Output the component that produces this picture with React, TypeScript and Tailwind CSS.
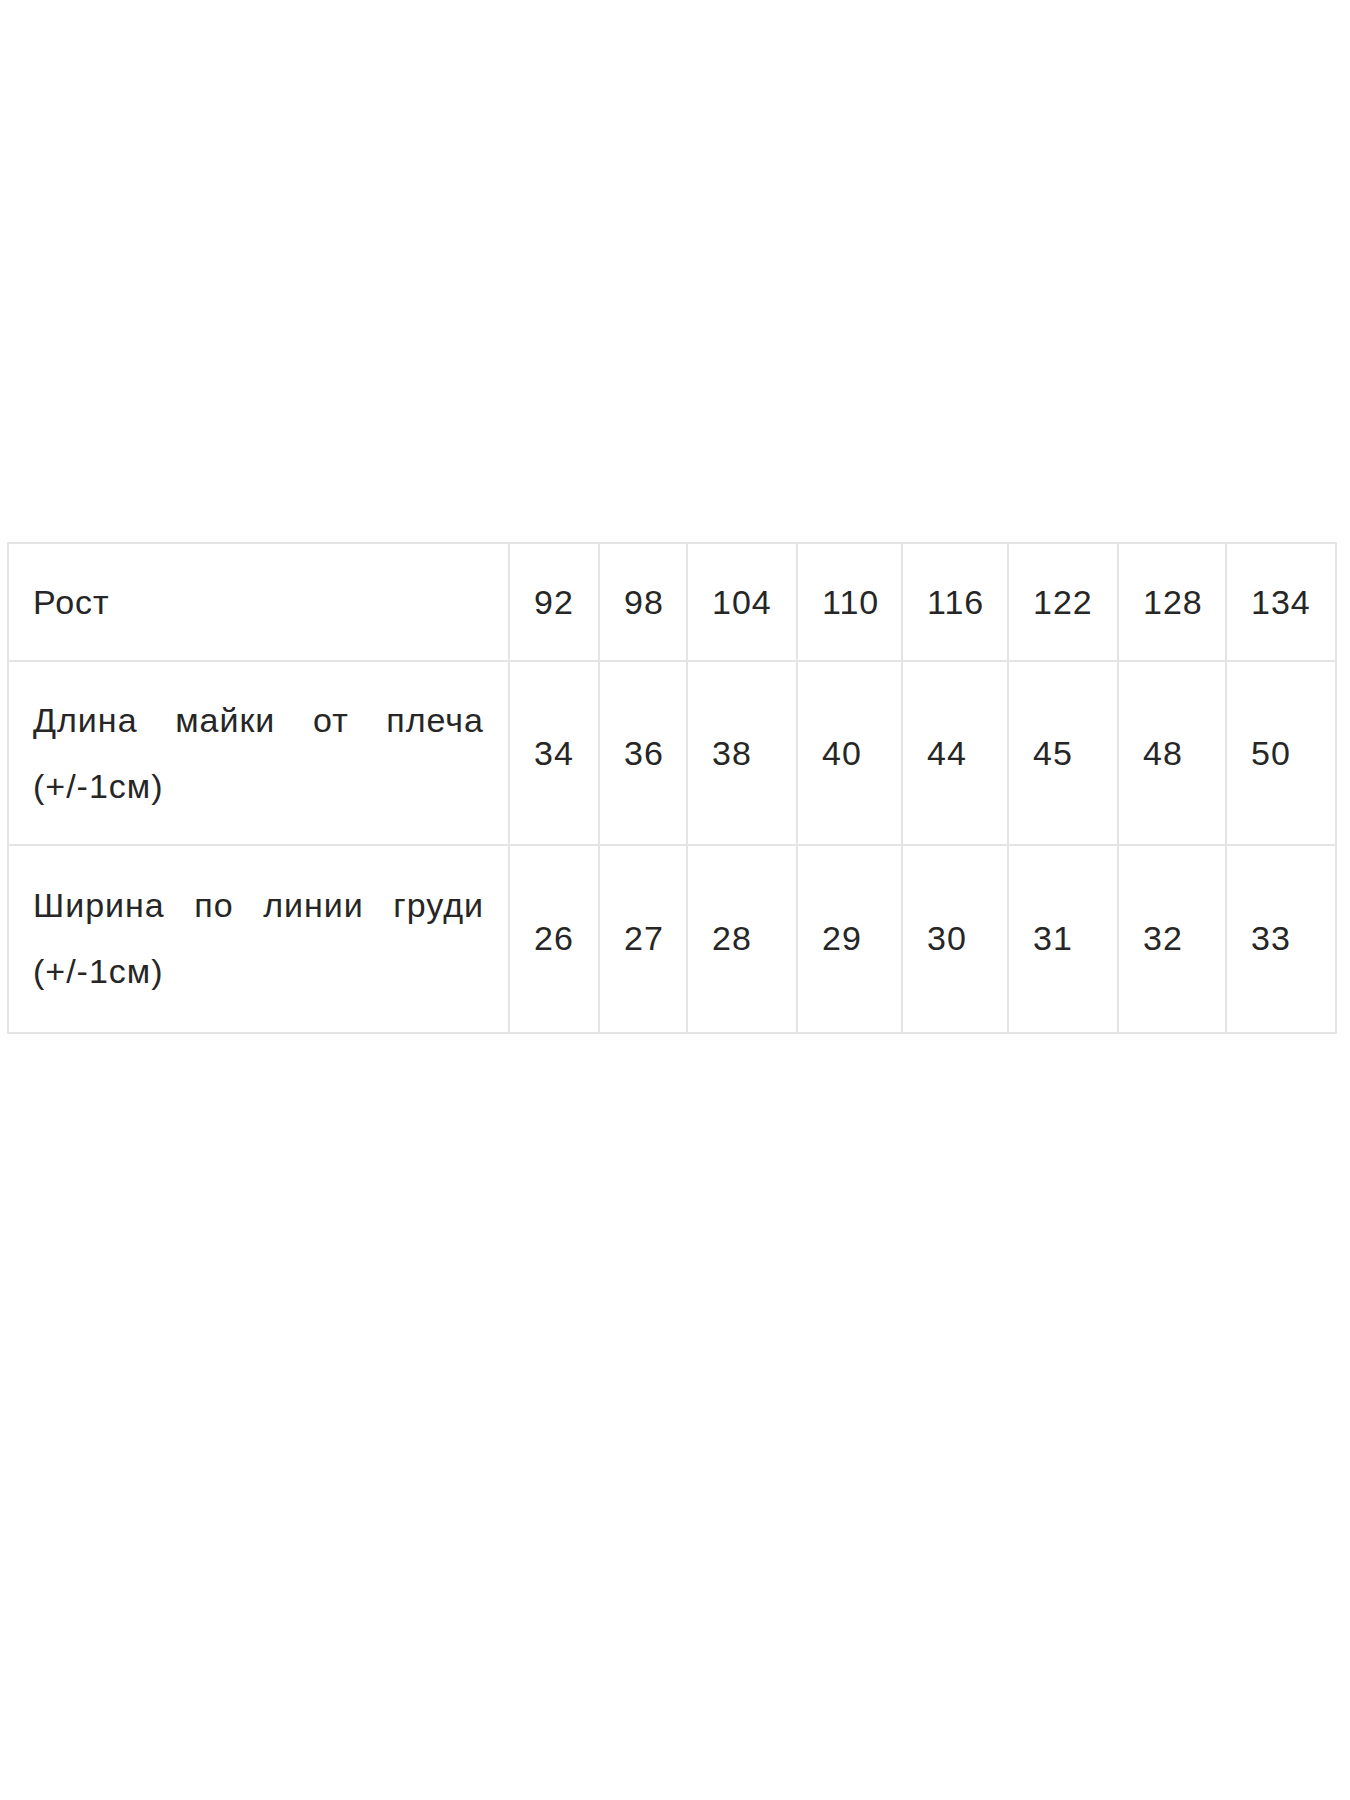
const heights = ["92", "98", "104", "110", "116", "122", "128", "134"];
const lengths = ["34", "36", "38", "40", "44", "45", "48", "50"];
const widths = ["26", "27", "28", "29", "30", "31", "32", "33"];

const colWidths = [501, 90, 88, 110, 105, 106, 110, 108, 110];

export default function App() {
  const cell = "border-2 border-[#e4e4e4] px-[24px] py-[25px] align-middle";
  const tallCell = "border-2 border-[#e4e4e4] px-[24px] pt-[26px] pb-[28px] align-middle";

  return (
    <div className="min-h-[1800px] bg-white pt-[542px] pl-[7px] font-['Liberation_Sans',Arial,sans-serif] text-[34px] leading-[66px] tracking-[1px] text-[#262626]">
      <table className="w-[1330px] table-fixed border-collapse border-2 border-[#e4e4e4]">
        <colgroup>
          {colWidths.map((w, i) => (
            <col key={i} style={{ width: w }} />
          ))}
        </colgroup>
        <tbody>
          <tr>
            <td className={cell}>Рост</td>
            {heights.map((v) => (
              <td key={v} className={cell}>{v}</td>
            ))}
          </tr>
          <tr>
            <td className={`${cell} text-justify`}>Длина майки от плеча (+/-1см)</td>
            {lengths.map((v) => (
              <td key={v} className={cell}>{v}</td>
            ))}
          </tr>
          <tr>
            <td className={`${tallCell} text-justify`}>Ширина по линии груди (+/-1см)</td>
            {widths.map((v) => (
              <td key={v} className={tallCell}>{v}</td>
            ))}
          </tr>
        </tbody>
      </table>
    </div>
  );
}
